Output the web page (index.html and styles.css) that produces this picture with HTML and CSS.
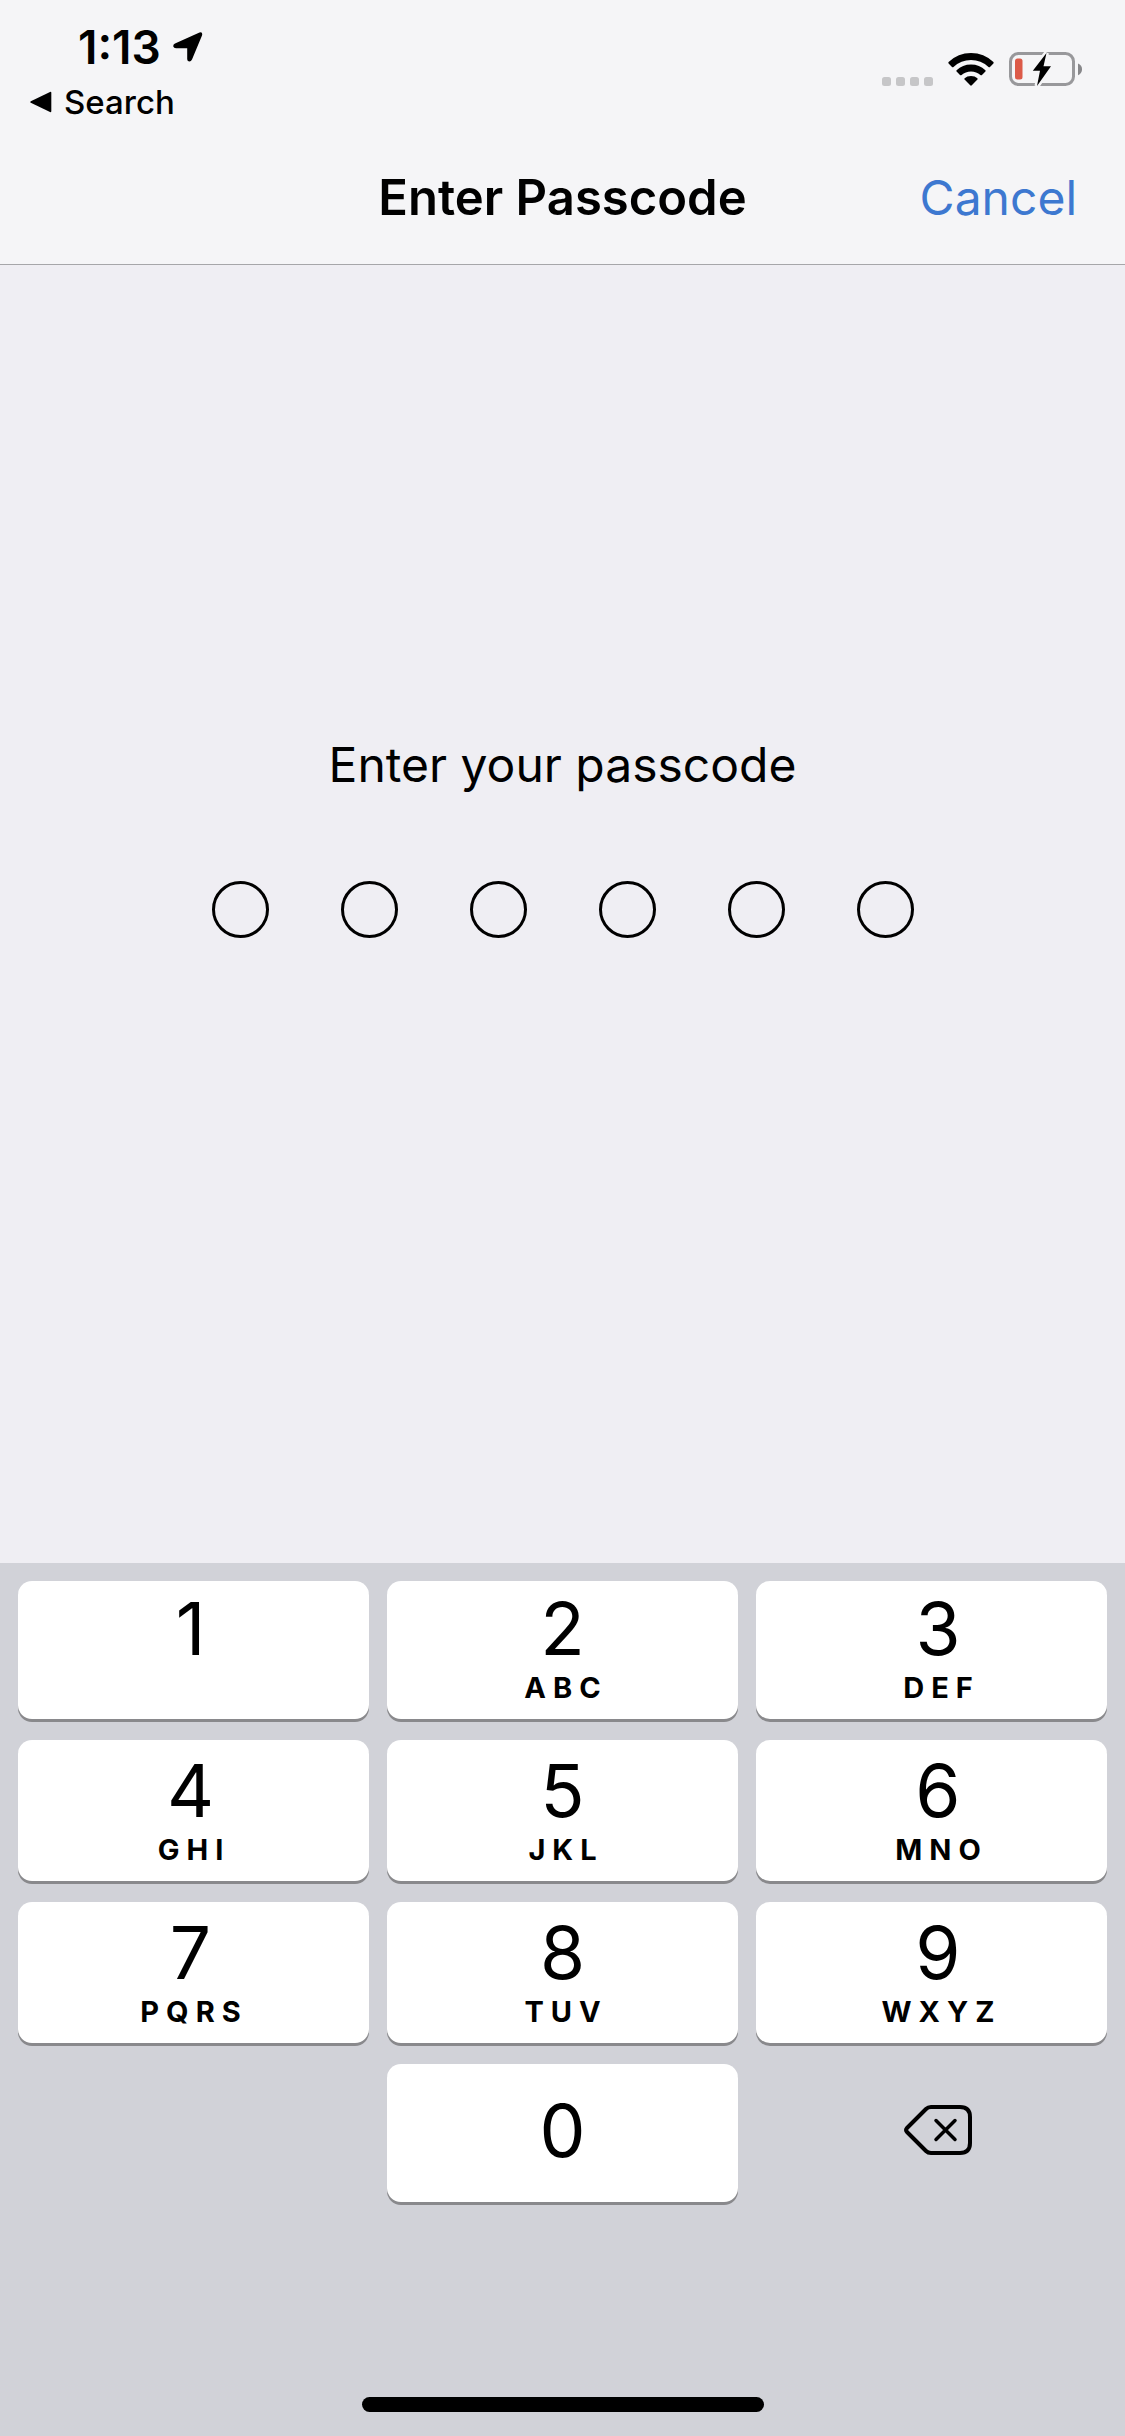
FILE: index.html
```html
<!DOCTYPE html>
<html lang="en">
<head>
<meta charset="utf-8">
<meta name="viewport" content="width=device-width, initial-scale=1">
<title>Enter Passcode</title>
<link rel="stylesheet" href="styles.css">
</head>
<body>
<header class="top">
  <div class="status">
    <div class="status-left">
      <div class="clock">
        <time>1:13</time>
        <svg width="30" height="30" viewBox="0 0 30 30" aria-hidden="true"><path d="M2 11.500 26.500.500Q30-.5 29 3.500L19 27.500Q17.800 30 15.500 29.300 14.200 28.700 14.200 27V16.200H3Q.8 16.200.3 14.500-.1 12.500 2 11.500Z"/></svg>
      </div>
      <a class="back" href="#">
        <svg width="22" height="22" viewBox="0 0 22 22" aria-hidden="true"><path d="M.8 10.200 20 .9Q21.300.5 21.300 1.800V20.200Q21.300 21.500 20 21.100L.8 11.800Q-.3 11 .8 10.200Z"/></svg>
        <span>Search</span>
      </a>
    </div>
    <div class="status-right">
      <svg width="51" height="10" viewBox="0 0 51 10" fill="#c6c6c8" aria-label="No signal"><rect width="9" height="9" rx="2.500"/><rect x="14" width="9" height="9" rx="2.500"/><rect x="28" width="9" height="9" rx="2.500"/><rect x="42" width="9" height="9" rx="2.500"/></svg>
      <svg width="46" height="34" viewBox="0 0 46 34" aria-label="Wi-Fi"><path d="M.6 9Q10 0 23 0T45.400 9Q46 9.800 45.400 10.500L42 13.900Q41.300 14.500 40.500 13.900 33 7 23 7T5.500 13.900Q4.700 14.500 4 13.900L.6 10.500Q0 9.800.6 9Z"/><path d="M8.600 17.200Q14.500 11.500 23 11.500T37.400 17.200Q38 17.900 37.400 18.600L34 22Q33.200 22.600 32.400 22 28.500 18.400 23 18.400T13.600 22Q12.800 22.600 12 22L8.600 18.600Q8 17.900 8.600 17.200Z"/><path d="M16.600 25.200Q19 23 23 23T29.400 25.200Q30 25.900 29.400 26.600L23.800 32.300Q23 33 22.200 32.300L16.600 26.600Q16 25.900 16.600 25.200Z"/></svg>
      <svg width="74" height="35" viewBox="0 0 74 35" aria-label="Battery low, charging"><rect x="1.500" y="1.500" width="63" height="31" rx="8" fill="none" stroke="#98989b" stroke-width="3"/><path d="M69 11.500Q73 13.200 73 17.200T69 23.200Z" fill="#87878a"/><rect x="6" y="6.500" width="7.500" height="21" rx="2.500" fill="#dc5a48"/><path d="M37.500 1 23.800 18.800H31L28 34 42 14.200H34.500Z" fill="#f5f5f7" stroke="#f5f5f7" stroke-width="5"/><path d="M37.500 1 23.800 18.800H31L28 34 42 14.200H34.500Z"/></svg>
    </div>
  </div>
  <nav class="navbar">
    <h1>Enter Passcode</h1>
    <button class="cancel" type="button">Cancel</button>
  </nav>
</header>

<main class="entry">
  <p class="prompt">Enter your passcode</p>
  <div class="dots" role="img" aria-label="0 of 6 digits entered">
    <span class="dot"></span><span class="dot"></span><span class="dot"></span><span class="dot"></span><span class="dot"></span><span class="dot"></span>
  </div>
</main>

<section class="keyboard" aria-label="Keypad">
  <div class="keys">
    <button class="key left" type="button"><span class="digit">1</span><span class="letters"></span></button>
    <button class="key" type="button"><span class="digit">2</span><span class="letters">ABC</span></button>
    <button class="key right" type="button"><span class="digit">3</span><span class="letters">DEF</span></button>
    <button class="key left" type="button"><span class="digit">4</span><span class="letters">GHI</span></button>
    <button class="key" type="button"><span class="digit">5</span><span class="letters">JKL</span></button>
    <button class="key right" type="button"><span class="digit">6</span><span class="letters">MNO</span></button>
    <button class="key left" type="button"><span class="digit">7</span><span class="letters">PQRS</span></button>
    <button class="key" type="button"><span class="digit">8</span><span class="letters">TUV</span></button>
    <button class="key right" type="button"><span class="digit">9</span><span class="letters">WXYZ</span></button>
    <button class="key zero" type="button"><span class="digit">0</span></button>
    <button class="key right delete" type="button" aria-label="Delete">
      <svg width="68" height="50" viewBox="0 0 68 50" fill="none" stroke="#000" stroke-linecap="round" stroke-linejoin="round"><path stroke-width="4" d="M27 2H56Q66 2 66 12V38Q66 48 56 48H27Q24 48 22 46L3 27Q1 25 3 23L22 4Q24 2 27 2Z"/><path stroke-width="3.500" d="M32 15.500 51 34.500M51 15.500 32 34.500"/></svg>
    </button>
  </div>
  <div class="home-bar"></div>
</section>
</body>
</html>
```
FILE: styles.css
```css
* {
  box-sizing: border-box;
}

body {
  margin: 0;
  min-height: 100vh;
  display: flex;
  flex-direction: column;
  background: #efeef3;
  color: #000;
  font-family: Inter, "Liberation Sans", sans-serif;
}

button {
  border: 0;
  padding: 0;
  background: none;
  color: inherit;
  font: inherit;
}

svg {
  display: block;
  flex: none;
}

.top {
  background: #f5f5f7;
  border-bottom: 1px solid #a6a6a9;
}

.status {
  display: flex;
  justify-content: space-between;
  align-items: flex-start;
  height: 132px;
  padding: 20px 42px 0 30px;
}

.clock {
  display: flex;
  align-items: center;
  gap: 12px;
  padding-left: 48px;
  font-size: 46px;
  font-weight: 600;
  line-height: 54px;
}

.back {
  display: flex;
  align-items: center;
  gap: 12px;
  color: inherit;
  font-size: 33px;
  font-weight: 500;
  line-height: 56px;
  text-decoration: none;
}

.status-right {
  display: flex;
  align-items: flex-end;
  gap: 15px;
  padding-top: 32px;
}

.navbar {
  display: grid;
  grid-template-columns: 1fr auto 1fr;
  align-items: center;
  height: 132px;
  padding: 0 48px;
}

h1 {
  grid-column: 2;
  margin: 0;
  font-size: 49px;
  font-weight: 600;
  line-height: 60px;
}

.cancel {
  justify-self: end;
  color: #3d78d0;
  font-size: 48px;
  line-height: 60px;
}

.entry {
  flex: 1;
  display: flex;
  flex-direction: column;
  align-items: center;
  justify-content: center;
  gap: 86px;
  padding-bottom: 155px;
}

.prompt {
  margin: 0;
  font-size: 48px;
  line-height: 60px;
}

.dots {
  display: flex;
  gap: 72px;
}

.dot {
  width: 57px;
  height: 57px;
  border: 3px solid #000;
  border-radius: 50%;
}

.keyboard {
  display: flex;
  flex-direction: column;
  align-items: center;
  gap: 195px;
  padding: 18px 18px 24px;
  background: #d1d2d8;
}

.keys {
  width: 100%;
  display: grid;
  grid-template-columns: repeat(3, 1fr);
  grid-template-rows: 138px 141px 141px 138px;
  gap: 21px 18px;
}

.key {
  display: flex;
  flex-direction: column;
  align-items: center;
  justify-content: flex-end;
  gap: 7px;
  padding-bottom: 15px;
  border-radius: 14px;
  background: #fff;
  box-shadow: 0 3px 0 #89898c;
}

.digit {
  font-size: 73px;
  line-height: 72px;
}

.letters {
  height: 32px;
  padding-left: 7px;
  font-size: 29px;
  font-weight: 700;
  line-height: 32px;
  letter-spacing: 7px;
}

.left {
  padding-right: 6px;
}

.right {
  padding-left: 13px;
}

.zero {
  grid-column: 2;
  justify-content: center;
  padding-bottom: 4px;
}

.delete {
  justify-content: center;
  padding-bottom: 6px;
  background: none;
  box-shadow: none;
}

.home-bar {
  width: 402px;
  height: 15px;
  border-radius: 8px;
  background: #000;
}
```
